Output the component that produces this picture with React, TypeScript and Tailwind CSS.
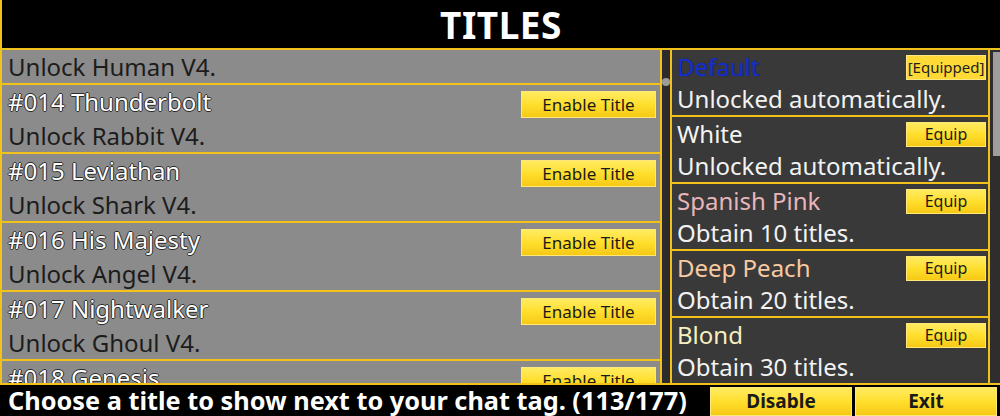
import React from "react";

const leftItems = [
  { name: "#014 Thunderbolt", desc: "Unlock Rabbit V4." },
  { name: "#015 Leviathan", desc: "Unlock Shark V4." },
  { name: "#016 His Majesty", desc: "Unlock Angel V4." },
  { name: "#017 Nightwalker", desc: "Unlock Ghoul V4." },
  { name: "#018 Genesis", desc: "Unlock Cyborg V4." },
];

const colorItems = [
  { name: "Default", desc: "Unlocked automatically.", color: "text-[#1630d0]", equipped: true },
  { name: "White", desc: "Unlocked automatically.", color: "text-[#f4f4f4]", equipped: false },
  { name: "Spanish Pink", desc: "Obtain 10 titles.", color: "text-[#e8b5ba]", equipped: false },
  { name: "Deep Peach", desc: "Obtain 20 titles.", color: "text-[#f9c9a2]", equipped: false },
  { name: "Blond", desc: "Obtain 30 titles.", color: "text-[#f6efc0]", equipped: false },
];

const outline = "[text-shadow:-1px_0_#2a2a2a,1px_0_#2a2a2a,0_-1px_#2a2a2a,0_1px_#2a2a2a]";

const yellowBtn =
  "flex items-center justify-center border border-[#ffe77a] bg-gradient-to-b from-[#ffeb5e] via-[#ffdf2c] to-[#f6c915] text-[#1a1a1a]";

export default function App() {
  return (
    <div
      className="w-[1000px] h-[416px] overflow-hidden flex flex-col bg-black"
      style={{ fontFamily: '"Noto Sans", "Open Sans", sans-serif' }}
    >
      {/* header */}
      <div className="h-[50px] shrink-0 border-l-2 border-b-2 border-[#f2c21b] flex items-center justify-center">
        <h1 className="text-[37px] font-bold text-white leading-none tracking-[0.5px]">TITLES</h1>
      </div>

      {/* body */}
      <div className="h-[333px] shrink-0 flex overflow-hidden">
        {/* title list */}
        <div className="w-[660px] shrink-0 border-l-2 border-[#f2c21b] bg-[#8b8b8b] overflow-hidden">
          <div className="h-[35px] border-b-2 border-[#f2c21b] flex items-center pl-[6px]">
            <span className="text-[24px] text-[#1c1c1c] leading-none">Unlock Human V4.</span>
          </div>
          {leftItems.map((item) => (
            <div key={item.name} className="border-b-2 border-[#f2c21b]">
              <div className="h-[34px] flex items-end justify-between pl-[6px] pr-[4px] pb-[1px]">
                <span className={`text-[24px] text-white leading-[33px] ${outline}`}>{item.name}</span>
                <button className={`${yellowBtn} w-[135px] h-[27px] text-[17px]`}>Enable Title</button>
              </div>
              <div className="h-[33px] flex items-center pl-[6px]">
                <span className="text-[24px] text-[#1c1c1c] leading-none">{item.desc}</span>
              </div>
            </div>
          ))}
        </div>

        {/* left scrollbar */}
        <div className="w-[10px] shrink-0 border-l-2 border-[#f2c21b] bg-[#2c2c2c] flex flex-col items-center">
          <div className="mt-[28px] w-[8px] h-[8px] rounded-full bg-[#9d9d9d]" />
        </div>

        {/* colour list */}
        <div className="w-[320px] shrink-0 border-l-2 border-r-2 border-[#f2c21b] bg-[#393939] overflow-hidden">
          {colorItems.map((item) => (
            <div key={item.name} className="border-b-2 border-[#f2c21b]">
              <div className="h-[33px] flex items-center justify-between pl-[5px] pr-[2px]">
                <span
                  className={`text-[24px] leading-none ${item.color} ${item.equipped ? "[text-shadow:0_0_1px_#0a1466]" : ""}`}
                >
                  {item.name}
                </span>
                {item.equipped ? (
                  <div className="mt-[1px] w-[80px] h-[25px] flex items-center justify-center border border-[#ffe680] bg-[#ffd936] text-[15px] text-[#222]">
                    [Equipped]
                  </div>
                ) : (
                  <button className={`${yellowBtn} mt-[1px] w-[80px] h-[25px] text-[16px]`}>Equip</button>
                )}
              </div>
              <div className="h-[32px] flex items-center pl-[5px]">
                <span className="text-[24px] text-[#f2f2f2] leading-none">{item.desc}</span>
              </div>
            </div>
          ))}
        </div>

        {/* right scrollbar */}
        <div className="flex-1 bg-[#2e2e2e] flex justify-end">
          <div className="mt-[2px] w-[7px] h-[104px] bg-[#9e9e9e]" />
        </div>
      </div>

      {/* footer */}
      <div className="flex-1 border-t-2 border-[#f2c21b] flex items-end">
        <div className="flex-1 h-full flex items-center pl-[8px]">
          <span className="text-[25.3px] font-bold text-white leading-none whitespace-nowrap">
            Choose a title to show next to your chat tag. (113/177)
          </span>
        </div>
        <button className={`${yellowBtn} w-[142px] h-[29px] text-[19px] font-bold`}>Disable</button>
        <button className={`${yellowBtn} ml-[3px] mr-[3px] w-[142px] h-[29px] text-[19px] font-bold`}>Exit</button>
      </div>
    </div>
  );
}
